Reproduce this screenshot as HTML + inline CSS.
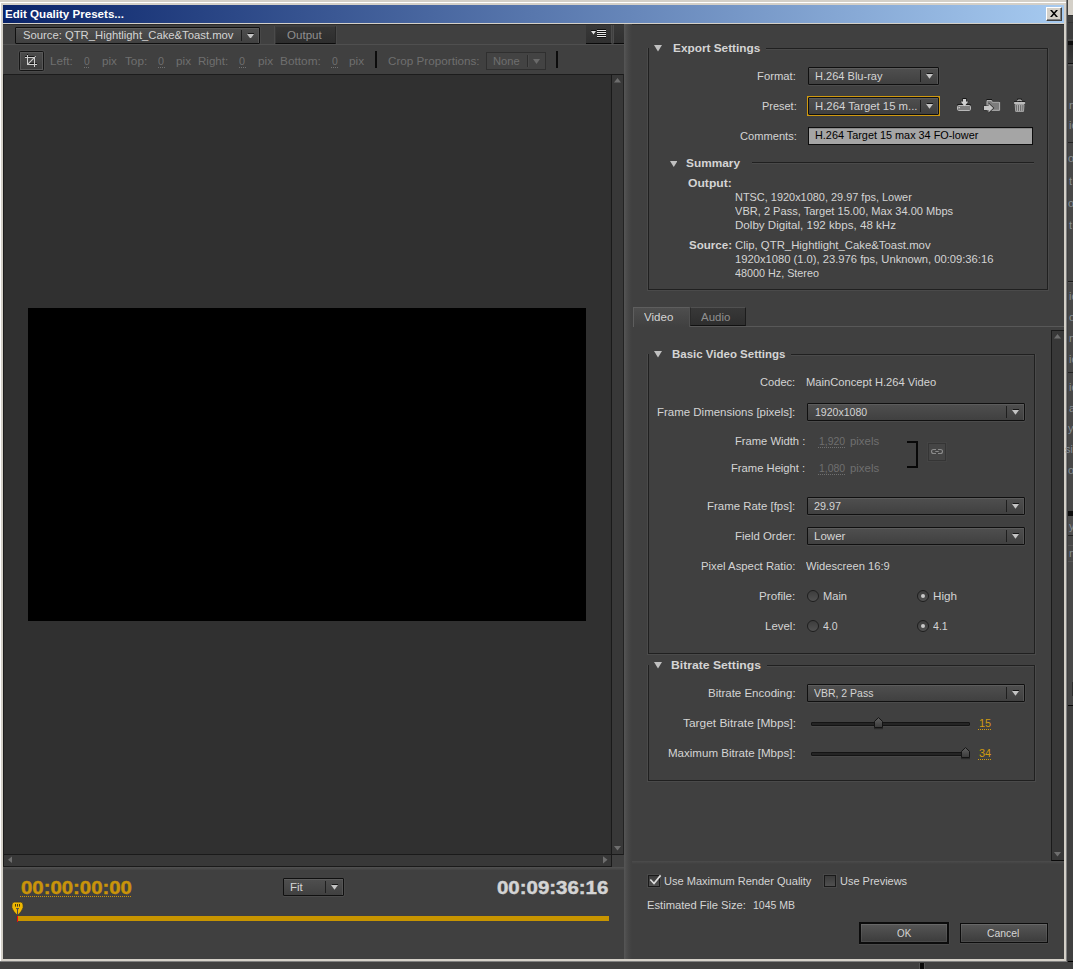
<!DOCTYPE html>
<html><head><meta charset="utf-8"><title>Edit Quality Presets</title>
<style>
html,body{margin:0;padding:0;overflow:hidden;}
#r{position:absolute;left:0;top:0;width:1073px;height:969px;overflow:hidden;}
body{width:1073px;height:969px;position:relative;overflow:hidden;background:#404040;font-family:"Liberation Sans", sans-serif;font-size:11px;}
#r div,#r svg{position:absolute;display:block;}
#r .t{white-space:pre;line-height:20px;height:20px;transform-origin:0 0;}
#r .d{position:absolute;height:1px;}
</style></head>
<body><div id="r">
<div style="left:1068px;top:0px;width:5px;height:15px;background:#d4d0c8;"></div>
<div style="left:1068px;top:15px;width:5px;height:1px;background:#333;"></div>
<div style="left:1068px;top:16px;width:5px;height:6px;background:#404040;"></div>
<div style="left:1068px;top:22px;width:5px;height:1px;background:#333;"></div>
<div style="left:1068px;top:23px;width:5px;height:16px;background:#3e3e3e;"></div>
<div style="left:1068px;top:39px;width:5px;height:2px;background:#4a4a4a;"></div>
<div style="left:1068px;top:41px;width:5px;height:4px;background:#0e0e0e;"></div>
<div style="left:1068px;top:45px;width:5px;height:18px;background:linear-gradient(#2e2e2e,#3a3a3a);"></div>
<div style="left:1068px;top:63px;width:5px;height:1px;background:#111;"></div>
<div style="left:1068px;top:64px;width:5px;height:2px;background:#555;"></div>
<div style="left:1068px;top:66px;width:5px;height:639px;background:#484848;"></div>
<div style="left:1068px;top:142px;width:5px;height:1px;background:#242424;"></div>
<div style="left:1068px;top:281px;width:5px;height:1px;background:#1c1c1c;"></div>
<div style="left:1068px;top:282px;width:5px;height:1px;background:#555;"></div>
<div style="left:1068px;top:372px;width:5px;height:1px;background:#242424;"></div>
<div style="left:1068px;top:511px;width:5px;height:5px;background:#0e0e0e;"></div>
<div style="left:1068px;top:516px;width:5px;height:19px;background:#4e4e4e;"></div>
<div style="left:1068px;top:535px;width:5px;height:1px;background:#242424;"></div>
<div style="left:1068px;top:545px;width:5px;height:1px;background:#565656;"></div>
<div style="left:1068px;top:561px;width:5px;height:1px;background:#565656;"></div>
<div style="left:1068px;top:705px;width:5px;height:1px;background:#0a0a0a;"></div>
<div style="left:1068px;top:706px;width:5px;height:255px;background:#404040;"></div>
<div style="left:1068px;top:961px;width:5px;height:1px;background:#000;"></div>
<div style="left:1072px;top:682px;width:1px;height:14px;background:#2c2c2c;"></div>
<div style="left:0px;top:962px;width:1073px;height:7px;background:#404040;"></div>
<div style="left:919px;top:963px;width:6px;height:6px;background:#555;"></div>
<div style="left:920px;top:963px;width:4px;height:6px;background:#0a0a0a;"></div>
<div style="left:0px;top:0px;width:1068px;height:962px;background:#d4d0c8;"></div>
<div style="left:0px;top:2px;width:1066px;height:1px;background:#fff;"></div>
<div style="left:0px;top:2px;width:1px;height:959px;background:#fff;"></div>
<div style="left:1066px;top:0px;width:1px;height:962px;background:#808080;"></div>
<div style="left:1067px;top:0px;width:1px;height:962px;background:#404040;"></div>
<div style="left:0px;top:961px;width:1067px;height:1px;background:#808080;"></div>
<div style="left:3px;top:5px;width:1061px;height:18px;background:linear-gradient(90deg,#0a246a,#a6caf0);"></div>
<div style="left:1046px;top:7px;width:16px;height:14px;box-sizing:border-box;background:#d4d0c8;border:1px solid;border-color:#fff #404040 #404040 #fff;box-shadow:inset -1px -1px 0 #808080;"></div>
<svg style="left:1050px;top:10px" width="8" height="7" viewBox="0 0 8 7"><path d="M0 0H2L8 7H6ZM6 0H8L2 7H0Z" fill="#000"/></svg>
<div style="left:3px;top:24px;width:1061px;height:935px;background:#404040;"></div>
<div style="left:3px;top:24px;width:1061px;height:1px;background:#2c2c2c;"></div>
<div style="left:15px;top:27px;width:245px;height:17px;box-sizing:border-box;border:1px solid #101010;border-radius:1px;background:linear-gradient(#4f4f4f,#404040);box-shadow:inset 0 1px 0 #5c5c5c,inset -1px 0 0 #555,0 1px 0 #4b4b4b,1px 0 0 #484848;"></div><div style="left:241px;top:30px;width:1px;height:11px;background:#1e1e1e;"></div><div style="left:247.5px;top:32.5px;width:6.0px;height:1.0px;background:#161616;"></div><svg style="left:247.0px;top:33.5px" width="7" height="4.8" viewBox="0 0 7 4.8"><path d="M0 0H7L3.5 4.8Z" fill="#c4c4c4"/></svg>
<div style="left:275px;top:26px;width:61px;height:18px;box-sizing:border-box;background:linear-gradient(#363636,#2d2d2d);border:1px solid;border-color:#3e3e3e #282828 #0c0c0c #3a3a3a;box-shadow:-1px 0 0 #4a4a4a,1px 0 0 #484848;"></div>
<div style="left:586px;top:25px;width:26px;height:19px;box-sizing:border-box;background:linear-gradient(#383838,#303030);border-right:1px solid #4c4c4c;border-bottom:1px solid #0a0a0a;"></div>
<div style="left:613px;top:25px;width:11px;height:19px;box-sizing:border-box;background:linear-gradient(#383838,#303030);border-left:1px solid #4c4c4c;border-bottom:1px solid #0a0a0a;"></div>
<div style="left:597px;top:29px;width:9px;height:9px;background:#111;"></div>
<div style="left:597px;top:30px;width:9px;height:1px;background:#e8e8e8;"></div>
<div style="left:597px;top:32px;width:9px;height:1px;background:#e8e8e8;"></div>
<div style="left:597px;top:34px;width:9px;height:1px;background:#e8e8e8;"></div>
<div style="left:597px;top:36px;width:9px;height:1px;background:#e8e8e8;"></div>
<div style="left:591px;top:30px;width:5px;height:1px;background:#111;"></div>
<svg style="left:591.0px;top:31px" width="5" height="3.6" viewBox="0 0 5 3.6"><path d="M0 0H5L2.5 3.6Z" fill="#e0e0e0"/></svg>
<div style="left:3px;top:44px;width:621px;height:1px;background:#4f4f4f;"></div>
<div style="left:19px;top:51px;width:25px;height:20px;box-sizing:border-box;border:1px solid #151515;border-radius:1.5px;background:linear-gradient(#4c4c4c,#3c3c3c);box-shadow:inset 0 0 0 1px #585858,0 0 0 1px #494949;"></div>
<div style="left:25px;top:56px;width:9px;height:1px;background:#161616;"></div>
<div style="left:28px;top:63px;width:9px;height:1px;background:#161616;"></div>
<div style="left:27px;top:54px;width:1px;height:1px;background:#161616;"></div>
<div style="left:27px;top:55px;width:1px;height:10px;background:#cecece;"></div>
<div style="left:25px;top:57px;width:10px;height:1px;background:#cecece;"></div>
<div style="left:34px;top:57px;width:1px;height:10px;background:#cecece;"></div>
<div style="left:27px;top:64px;width:10px;height:1px;background:#cecece;"></div>
<div style="left:35px;top:56px;width:1px;height:1px;background:#b0b0b0;"></div>
<svg style="left:27px;top:57px" width="8" height="8" viewBox="0 0 8 8"><path d="M1.2 6.8L6.8 1.2" stroke="#cecece" stroke-width="1.1"/></svg>
<div style="left:375px;top:51px;width:2px;height:17px;background:#0c0c0c;"></div>
<div style="left:556px;top:51px;width:2px;height:17px;background:#0c0c0c;"></div>
<div style="left:486px;top:52px;width:60px;height:18px;box-sizing:border-box;border:1px solid #2f2f2f;background:#434343;"></div><div style="left:527px;top:55px;width:1px;height:12px;background:#2e2e2e;"></div><div style="left:528px;top:55px;width:1px;height:12px;background:#4a4a4a;"></div><svg style="left:533.0px;top:59.0px" width="7" height="5" viewBox="0 0 7 5"><path d="M0 0H7L3.5 5Z" fill="#6a6a6a"/></svg>
<div style="left:3px;top:74px;width:608px;height:780px;background:#303030;"></div>
<div style="left:3px;top:74px;width:608px;height:1px;background:#1c1c1c;"></div>
<div style="left:3px;top:74px;width:1px;height:780px;background:#1c1c1c;"></div>
<div style="left:28px;top:308px;width:558px;height:313px;background:#000;"></div>
<div style="left:611px;top:74px;width:13px;height:781px;box-sizing:border-box;background:#383838;border:1px solid #1a1a1a;border-right-color:#222;"></div>
<svg style="left:614px;top:78.3px" width="7" height="4.6" viewBox="0 0 8 5"><path d="M0 5H8L4 0Z" fill="#6e6e6e"/></svg>
<svg style="left:614px;top:846px" width="7" height="4.6" viewBox="0 0 8 5"><path d="M0 0H8L4 5Z" fill="#6e6e6e"/></svg>
<div style="left:3px;top:854px;width:609px;height:13px;box-sizing:border-box;background:#383838;border:1px solid #1a1a1a;"></div>
<svg style="left:7.7px;top:856.3px" width="4.5" height="7.6" viewBox="0 0 5 8"><path d="M5 0V8L0 4Z" fill="#6e6e6e"/></svg>
<svg style="left:603px;top:856.3px" width="4.5" height="7.6" viewBox="0 0 5 8"><path d="M0 0V8L5 4Z" fill="#6e6e6e"/></svg>
<div style="left:3px;top:867px;width:621px;height:3px;background:linear-gradient(#525252,#4a4a4a 50%,#434343);"></div>
<div style="left:283px;top:878px;width:61px;height:18px;box-sizing:border-box;border:1px solid #101010;border-radius:1px;background:linear-gradient(#4f4f4f,#404040);box-shadow:inset 0 1px 0 #5c5c5c,inset -1px 0 0 #555,0 1px 0 #4b4b4b,1px 0 0 #484848;"></div><div style="left:325px;top:881px;width:1px;height:12px;background:#1e1e1e;"></div><div style="left:331.5px;top:884.0px;width:6.0px;height:1.0px;background:#161616;"></div><svg style="left:331.0px;top:885.0px" width="7" height="4.8" viewBox="0 0 7 4.8"><path d="M0 0H7L3.5 4.8Z" fill="#c4c4c4"/></svg>
<div style="left:18px;top:916px;width:591px;height:5px;background:#c89500;"></div>
<div style="left:17px;top:916px;width:1px;height:6px;background:#f00808;"></div>
<svg style="left:10px;top:900px" width="15" height="17" viewBox="10 900 15 17"><path d="M14.2 902.1H20.8Q23.1 902.3 23.1 905V907.6Q22.5 910.8 17.5 915.6Q12.5 910.8 11.9 907.6V905Q11.9 902.3 14.2 902.1Z" fill="#f0b800" stroke="#3a3628" stroke-width="0.7"/><path d="M15.5 904V906.6M17.5 904V906.6M19.5 904V906.6" stroke="#3a3010" stroke-width="0.9" fill="none"/><path d="M16 908.6H19M17.5 909V915" stroke="#4a4a4a" stroke-width="1" fill="none"/></svg>
<div style="left:624px;top:24px;width:8px;height:935px;background:linear-gradient(90deg,#565656,#4b4b4b 35%,#454545 65%,#404040);"></div>
<div style="left:648px;top:48px;width:1px;height:241px;background:#202020;"></div><div style="left:1047px;top:48px;width:1px;height:242px;background:#202020;"></div><div style="left:648px;top:289px;width:399px;height:1px;background:#202020;"></div><div style="left:766px;top:48px;width:281px;height:1px;background:#202020;"></div><div style="left:647px;top:48px;width:1px;height:243px;background:#4a4a4a;"></div><div style="left:1048px;top:48px;width:1px;height:243px;background:#4a4a4a;"></div><div style="left:648px;top:290px;width:400px;height:1px;background:#4a4a4a;"></div><div style="left:766px;top:49px;width:281px;height:1px;background:#4a4a4a;"></div>
<svg style="left:654.2px;top:45px" width="8" height="6.5" viewBox="0 0 8 6.5"><path d="M0 0H8L4.0 6.5Z" fill="#c0c0c0"/></svg>
<div style="left:808px;top:67px;width:131px;height:18px;box-sizing:border-box;border:1px solid #101010;border-radius:1px;background:linear-gradient(#4f4f4f,#404040);box-shadow:inset 0 1px 0 #5c5c5c,inset -1px 0 0 #555,0 1px 0 #4b4b4b,1px 0 0 #484848;"></div><div style="left:920px;top:70px;width:1px;height:12px;background:#1e1e1e;"></div><div style="left:926.5px;top:73.0px;width:6.0px;height:1.0px;background:#161616;"></div><svg style="left:926.0px;top:74.0px" width="7" height="4.8" viewBox="0 0 7 4.8"><path d="M0 0H7L3.5 4.8Z" fill="#c4c4c4"/></svg>
<div style="left:807px;top:96px;width:133px;height:20px;background:#d19a0f;"></div><div style="left:808px;top:97px;width:131px;height:18px;box-sizing:border-box;border:1px solid #101010;border-radius:1px;background:linear-gradient(#4f4f4f,#404040);box-shadow:inset 0 1px 0 #5c5c5c,inset -1px 0 0 #555;"></div><div style="left:920px;top:100px;width:1px;height:12px;background:#1e1e1e;"></div><div style="left:926.5px;top:103.0px;width:6.0px;height:1.0px;background:#161616;"></div><svg style="left:926.0px;top:104.0px" width="7" height="4.8" viewBox="0 0 7 4.8"><path d="M0 0H7L3.5 4.8Z" fill="#c4c4c4"/></svg>
<svg style="left:955px;top:97px" width="18" height="16" viewBox="955 97 18 16">
<path d="M962.5 98H966.5V101H969L964.5 106L960 101H962.5Z" fill="#151515"/>
<rect x="957" y="104" width="14" height="7" rx="1.2" fill="#1a1a1a"/>
<rect x="957.5" y="105.5" width="13" height="5" rx="1" fill="#7e7e7e" stroke="#b8b8b8" stroke-width="1"/>
<path d="M963 99H966V101.6H968.4L964.5 106.3L960.6 101.6H963Z" fill="#d0d0d0"/>
<rect x="958.6" y="107" width="1.2" height="1.2" fill="#d8d8d8"/>
</svg>
<svg style="left:982px;top:97px" width="20" height="17" viewBox="982 97 20 17">
<path d="M986.5 99H992V101.2H1000V102H986.5Z" fill="#151515"/>
<path d="M987 110.3V100.5H991.5L992.2 102.2H999.6V110.3Z" fill="#7c7c7c" stroke="#b4b4b4" stroke-width="1"/>
<path d="M983.5 105.5H988.5V102.5L994.3 108L988.5 113.5V110.5H983.5Z" fill="#2a2a2a"/>
<path d="M984 106H988.5V103.5L993.3 108L988.5 112.5V110H984Z" fill="#c6c6c6"/>
</svg>
<svg style="left:1012px;top:97px" width="16" height="16" viewBox="1012 97 16 16">
<rect x="1017" y="98.6" width="5" height="3" rx="1" fill="#1a1a1a"/>
<rect x="1017.7" y="100.1" width="3.6" height="2.5" rx="0.9" fill="none" stroke="#c6c6c6" stroke-width="1.2"/>
<rect x="1014" y="101.2" width="11.2" height="1" fill="#1a1a1a"/>
<rect x="1014" y="102" width="11.2" height="2" rx="0.8" fill="#bdbdbd"/>
<path d="M1015.2 104.6H1024L1023.5 111.4H1015.7Z" fill="#6a6a6a" stroke="#b0b0b0" stroke-width="0.9"/>
<path d="M1017.4 105V111M1019.6 105V111M1021.8 105V111" stroke="#c0c0c0" stroke-width="0.9"/>
</svg>

<div style="left:808px;top:127px;width:225px;height:18px;box-sizing:border-box;border:1px solid #0c0c0c;background:#a5a5a5;box-shadow:inset 0 1px 0 #8a8a8a;"></div>
<svg style="left:669.55px;top:161px" width="7.5" height="6" viewBox="0 0 7.5 6"><path d="M0 0H7.5L3.75 6Z" fill="#c0c0c0"/></svg>
<div style="left:752px;top:162px;width:282px;height:1px;background:#202020;"></div>
<div style="left:752px;top:163px;width:282px;height:1px;background:#4a4a4a;"></div>
<div style="left:689px;top:326px;width:375px;height:1px;background:#585858;"></div>
<div style="left:633px;top:307px;width:57px;height:20px;box-sizing:border-box;background:linear-gradient(#4e4e4e,#404040);border:1px solid;border-color:#5e5e5e #505050 #404040 #5e5e5e;border-bottom:none;"></div>
<div style="left:690px;top:307px;width:56px;height:19px;box-sizing:border-box;background:linear-gradient(#383838,#2e2e2e);border:1px solid;border-color:#505050 #1c1c1c #111 #2a2a2a;"></div>
<div style="left:1051px;top:330px;width:13px;height:531px;box-sizing:border-box;background:#383838;border:1px solid #1a1a1a;border-right:none;border-bottom-color:#0a0a0a;"></div>
<svg style="left:1054px;top:334px" width="7" height="4.6" viewBox="0 0 8 5"><path d="M0 5H8L4 0Z" fill="#6e6e6e"/></svg>
<svg style="left:1054px;top:852px" width="7" height="4.5" viewBox="0 0 8 5"><path d="M0 0H8L4 5Z" fill="#6e6e6e"/></svg>
<div style="left:648px;top:354px;width:1px;height:299px;background:#202020;"></div><div style="left:1034px;top:354px;width:1px;height:300px;background:#202020;"></div><div style="left:648px;top:653px;width:386px;height:1px;background:#202020;"></div><div style="left:791px;top:354px;width:243px;height:1px;background:#202020;"></div><div style="left:647px;top:354px;width:1px;height:301px;background:#4a4a4a;"></div><div style="left:1035px;top:354px;width:1px;height:301px;background:#4a4a4a;"></div><div style="left:648px;top:654px;width:387px;height:1px;background:#4a4a4a;"></div><div style="left:791px;top:355px;width:243px;height:1px;background:#4a4a4a;"></div>
<svg style="left:654.2px;top:351px" width="8" height="6.5" viewBox="0 0 8 6.5"><path d="M0 0H8L4.0 6.5Z" fill="#c0c0c0"/></svg>
<div style="left:807px;top:403px;width:218px;height:18px;box-sizing:border-box;border:1px solid #101010;border-radius:1px;background:linear-gradient(#4f4f4f,#404040);box-shadow:inset 0 1px 0 #5c5c5c,inset -1px 0 0 #555,0 1px 0 #4b4b4b,1px 0 0 #484848;"></div><div style="left:1006px;top:406px;width:1px;height:12px;background:#1e1e1e;"></div><div style="left:1012.5px;top:409.0px;width:6.0px;height:1.0px;background:#161616;"></div><svg style="left:1012.0px;top:410.0px" width="7" height="4.8" viewBox="0 0 7 4.8"><path d="M0 0H7L3.5 4.8Z" fill="#c4c4c4"/></svg>
<div style="left:807px;top:497px;width:218px;height:18px;box-sizing:border-box;border:1px solid #101010;border-radius:1px;background:linear-gradient(#4f4f4f,#404040);box-shadow:inset 0 1px 0 #5c5c5c,inset -1px 0 0 #555,0 1px 0 #4b4b4b,1px 0 0 #484848;"></div><div style="left:1006px;top:500px;width:1px;height:12px;background:#1e1e1e;"></div><div style="left:1012.5px;top:503.0px;width:6.0px;height:1.0px;background:#161616;"></div><svg style="left:1012.0px;top:504.0px" width="7" height="4.8" viewBox="0 0 7 4.8"><path d="M0 0H7L3.5 4.8Z" fill="#c4c4c4"/></svg>
<div style="left:807px;top:527px;width:218px;height:18px;box-sizing:border-box;border:1px solid #101010;border-radius:1px;background:linear-gradient(#4f4f4f,#404040);box-shadow:inset 0 1px 0 #5c5c5c,inset -1px 0 0 #555,0 1px 0 #4b4b4b,1px 0 0 #484848;"></div><div style="left:1006px;top:530px;width:1px;height:12px;background:#1e1e1e;"></div><div style="left:1012.5px;top:533.0px;width:6.0px;height:1.0px;background:#161616;"></div><svg style="left:1012.0px;top:534.0px" width="7" height="4.8" viewBox="0 0 7 4.8"><path d="M0 0H7L3.5 4.8Z" fill="#c4c4c4"/></svg>
<div style="left:907px;top:441px;width:11px;height:27px;box-sizing:border-box;border:2px solid #080808;border-left:none;"></div>
<div style="left:928px;top:443px;width:18px;height:18px;box-sizing:border-box;border:1px solid #353535;background:#454545;box-shadow:0 0 0 1px #444;"></div>
<svg style="left:930px;top:447px" width="14" height="10" viewBox="0 0 14 10"><path d="M6 2.5H3.5Q1.5 2.5 1.5 4.5Q1.5 6.5 3.5 6.5H6M8 2.5H10.5Q12.5 2.5 12.5 4.5Q12.5 6.5 10.5 6.5H8M5.3 4.5H8.7" fill="none" stroke="#8c8c8c" stroke-width="1.1"/></svg>
<svg style="left:806px;top:589px" width="14" height="14" viewBox="0 0 14 14"><defs><linearGradient id="rg813596" x1="0" y1="0" x2="0" y2="1"><stop offset="0" stop-color="#3c3c3c"/><stop offset="1" stop-color="#525252"/></linearGradient></defs><circle cx="7" cy="7" r="5.5" fill="url(#rg813596)" stroke="#1e1e1e" stroke-width="1"/></svg>
<svg style="left:916px;top:589px" width="14" height="14" viewBox="0 0 14 14"><defs><linearGradient id="rg923596" x1="0" y1="0" x2="0" y2="1"><stop offset="0" stop-color="#3c3c3c"/><stop offset="1" stop-color="#525252"/></linearGradient></defs><circle cx="7" cy="7" r="5.5" fill="url(#rg923596)" stroke="#1e1e1e" stroke-width="1"/><circle cx="7" cy="7" r="2" fill="#c8c8c8"/></svg>
<svg style="left:806px;top:619px" width="14" height="14" viewBox="0 0 14 14"><defs><linearGradient id="rg813626" x1="0" y1="0" x2="0" y2="1"><stop offset="0" stop-color="#3c3c3c"/><stop offset="1" stop-color="#525252"/></linearGradient></defs><circle cx="7" cy="7" r="5.5" fill="url(#rg813626)" stroke="#1e1e1e" stroke-width="1"/></svg>
<svg style="left:916px;top:619px" width="14" height="14" viewBox="0 0 14 14"><defs><linearGradient id="rg923626" x1="0" y1="0" x2="0" y2="1"><stop offset="0" stop-color="#3c3c3c"/><stop offset="1" stop-color="#525252"/></linearGradient></defs><circle cx="7" cy="7" r="5.5" fill="url(#rg923626)" stroke="#1e1e1e" stroke-width="1"/><circle cx="7" cy="7" r="2" fill="#c8c8c8"/></svg>
<div style="left:648px;top:665px;width:1px;height:115px;background:#202020;"></div><div style="left:1034px;top:665px;width:1px;height:116px;background:#202020;"></div><div style="left:648px;top:780px;width:386px;height:1px;background:#202020;"></div><div style="left:767px;top:665px;width:267px;height:1px;background:#202020;"></div><div style="left:647px;top:665px;width:1px;height:117px;background:#4a4a4a;"></div><div style="left:1035px;top:665px;width:1px;height:117px;background:#4a4a4a;"></div><div style="left:648px;top:781px;width:387px;height:1px;background:#4a4a4a;"></div><div style="left:767px;top:666px;width:267px;height:1px;background:#4a4a4a;"></div>
<svg style="left:654.2px;top:662px" width="8" height="6.5" viewBox="0 0 8 6.5"><path d="M0 0H8L4.0 6.5Z" fill="#c0c0c0"/></svg>
<div style="left:807px;top:684px;width:218px;height:18px;box-sizing:border-box;border:1px solid #101010;border-radius:1px;background:linear-gradient(#4f4f4f,#404040);box-shadow:inset 0 1px 0 #5c5c5c,inset -1px 0 0 #555,0 1px 0 #4b4b4b,1px 0 0 #484848;"></div><div style="left:1006px;top:687px;width:1px;height:12px;background:#1e1e1e;"></div><div style="left:1012.5px;top:690.0px;width:6.0px;height:1.0px;background:#161616;"></div><svg style="left:1012.0px;top:691.0px" width="7" height="4.8" viewBox="0 0 7 4.8"><path d="M0 0H7L3.5 4.8Z" fill="#c4c4c4"/></svg>
<div style="left:811px;top:722px;width:159px;height:4px;box-sizing:border-box;border:1px solid #141414;background:#242424;border-radius:1px;box-shadow:0 1px 0 #484848;"></div><svg style="left:873.0px;top:716px" width="11" height="14" viewBox="0 0 11 14"><defs><linearGradient id="sg724" x1="0" y1="0" x2="0" y2="1"><stop offset="0" stop-color="#606060"/><stop offset="1" stop-color="#3a3a3a"/></linearGradient></defs><path d="M1 12.6H10" stroke="#2a2a2a" stroke-width="1.2"/><path d="M5.5 1.6L9.5 5.4V11.5H1.5V5.4Z" fill="url(#sg724)" stroke="#141414" stroke-width="1"/></svg>
<div style="left:811px;top:752px;width:159px;height:4px;box-sizing:border-box;border:1px solid #141414;background:#242424;border-radius:1px;box-shadow:0 1px 0 #484848;"></div><svg style="left:959.5px;top:746px" width="11" height="14" viewBox="0 0 11 14"><defs><linearGradient id="sg754" x1="0" y1="0" x2="0" y2="1"><stop offset="0" stop-color="#606060"/><stop offset="1" stop-color="#3a3a3a"/></linearGradient></defs><path d="M1 12.6H10" stroke="#2a2a2a" stroke-width="1.2"/><path d="M5.5 1.6L9.5 5.4V11.5H1.5V5.4Z" fill="url(#sg754)" stroke="#141414" stroke-width="1"/></svg>
<div style="left:632px;top:861px;width:432px;height:3px;background:linear-gradient(#4c4c4c,#474747 40%,#404040);"></div>
<div style="left:648px;top:875px;width:12px;height:12px;box-sizing:border-box;border:1px solid #1a1a1a;background:linear-gradient(#3c3c3c,#505050);box-shadow:0 0 0 1px #494949;"></div><svg style="left:648px;top:873px" width="14" height="14" viewBox="0 0 14 14"><path d="M2.3 6.5L6 10.5L12.6 2.4" fill="none" stroke="#dcdcdc" stroke-width="1.7"/></svg>
<div style="left:824px;top:875px;width:12px;height:12px;box-sizing:border-box;border:1px solid #1a1a1a;background:linear-gradient(#3c3c3c,#505050);box-shadow:0 0 0 1px #494949;"></div>
<div style="left:859px;top:922px;width:90px;height:22px;box-sizing:border-box;border:2px solid #0c0c0c;background:linear-gradient(#565656,#3c3c3c);box-shadow:inset 0 1px 0 #676767,inset 0 0 0 1px rgba(255,255,255,0.07),0 1px 0 #4a4a4a,1px 0 0 #474747;"></div>
<div style="left:960px;top:923px;width:88px;height:20px;box-sizing:border-box;border:1px solid #0c0c0c;background:linear-gradient(#565656,#3c3c3c);box-shadow:inset 0 1px 0 #676767,inset 0 0 0 1px rgba(255,255,255,0.07),0 1px 0 #4a4a4a,1px 0 0 #474747;"></div>
<div class="t" id="t0" style="left:5px;top:4.00px;font-size:11px;font-weight:bold;color:#ffffff;transform:scaleX(1.0522);">Edit Quality Presets...</div>
<div class="t" id="t1" style="left:22.5px;top:25.00px;font-size:11px;font-weight:normal;color:#d4d4d4;transform:scaleX(1.0246);">Source: QTR_Hightlight_Cake&amp;Toast.mov</div>
<div class="t" id="t2" style="left:286.5px;top:25.00px;font-size:11px;font-weight:normal;color:#8f8f8f;transform:scaleX(1.0505);">Output</div>
<div class="t" id="t3" style="left:50.3px;top:51.00px;font-size:11px;font-weight:normal;color:#6f6f6f;transform:scaleX(1.0604);">Left:</div>
<div class="t" id="t4" style="left:84.3px;top:51.00px;font-size:11px;font-weight:normal;color:#6f6f6f;transform:scaleX(0.9306);">0</div>
<div class="d" style="left:83.8px;top:67px;width:6.7px;background:repeating-linear-gradient(90deg,#6f6f6f 0 1px,transparent 1px 2px);"></div>
<div class="t" id="t5" style="left:102.4px;top:51.00px;font-size:11px;font-weight:normal;color:#6f6f6f;transform:scaleX(1.0596);">pix</div>
<div class="t" id="t6" style="left:125px;top:51.00px;font-size:11px;font-weight:normal;color:#6f6f6f;transform:scaleX(1.0675);">Top:</div>
<div class="t" id="t7" style="left:158px;top:51.00px;font-size:11px;font-weight:normal;color:#6f6f6f;transform:scaleX(0.9796);">0</div>
<div class="d" style="left:157.5px;top:67px;width:7.0px;background:repeating-linear-gradient(90deg,#6f6f6f 0 1px,transparent 1px 2px);"></div>
<div class="t" id="t8" style="left:176px;top:51.00px;font-size:11px;font-weight:normal;color:#6f6f6f;transform:scaleX(1.0667);">pix</div>
<div class="t" id="t9" style="left:198.3px;top:51.00px;font-size:11px;font-weight:normal;color:#6f6f6f;transform:scaleX(1.0504);">Right:</div>
<div class="t" id="t10" style="left:239px;top:51.00px;font-size:11px;font-weight:normal;color:#6f6f6f;transform:scaleX(0.9796);">0</div>
<div class="d" style="left:238.5px;top:67px;width:7.0px;background:repeating-linear-gradient(90deg,#6f6f6f 0 1px,transparent 1px 2px);"></div>
<div class="t" id="t11" style="left:257.5px;top:51.00px;font-size:11px;font-weight:normal;color:#6f6f6f;transform:scaleX(1.0738);">pix</div>
<div class="t" id="t12" style="left:279.7px;top:51.00px;font-size:11px;font-weight:normal;color:#6f6f6f;transform:scaleX(1.0763);">Bottom:</div>
<div class="t" id="t13" style="left:331.8px;top:51.00px;font-size:11px;font-weight:normal;color:#6f6f6f;transform:scaleX(0.9469);">0</div>
<div class="d" style="left:331.3px;top:67px;width:6.8px;background:repeating-linear-gradient(90deg,#6f6f6f 0 1px,transparent 1px 2px);"></div>
<div class="t" id="t14" style="left:349.4px;top:51.00px;font-size:11px;font-weight:normal;color:#6f6f6f;transform:scaleX(1.0738);">pix</div>
<div class="t" id="t15" style="left:387.9px;top:51.00px;font-size:11px;font-weight:normal;color:#6f6f6f;transform:scaleX(1.0624);">Crop Proportions:</div>
<div class="t" id="t16" style="left:493.4px;top:51.00px;font-size:11px;font-weight:normal;color:#6f6f6f;transform:scaleX(1.0115);">None</div>
<div class="t" id="t17" style="left:20.5px;top:877.50px;font-size:18px;font-weight:bold;color:#c9940a;transform:scaleX(1.1307);-webkit-text-stroke:0.45px #c9940a;">00:00:00:00</div>
<div class="d" style="left:20.0px;top:896.0px;width:111.9px;background:repeating-linear-gradient(90deg,#c9940a 0 1px,transparent 1px 2px);"></div>
<div class="t" id="t18" style="left:497px;top:877.50px;font-size:18px;font-weight:bold;color:#d4d4d4;transform:scaleX(1.1348);-webkit-text-stroke:0.45px #d4d4d4;">00:09:36:16</div>
<div class="t" id="t19" style="left:290.4px;top:877.00px;font-size:11px;font-weight:normal;color:#d4d4d4;transform:scaleX(1.0462);">Fit</div>
<div class="t" id="t20" style="left:672.6px;top:38.00px;font-size:11px;font-weight:bold;color:#d4d4d4;transform:scaleX(1.0738);">Export Settings</div>
<div class="t" id="t21" style="left:757.4px;top:66.00px;font-size:11px;font-weight:normal;color:#d4d4d4;transform:scaleX(1.0236);">Format:</div>
<div class="t" id="t22" style="left:815px;top:66.00px;font-size:11px;font-weight:normal;color:#d4d4d4;transform:scaleX(1.0035);">H.264 Blu-ray</div>
<div class="t" id="t23" style="left:761.5px;top:96.00px;font-size:11px;font-weight:normal;color:#d4d4d4;transform:scaleX(0.9954);">Preset:</div>
<div class="t" id="t24" style="left:815px;top:96.00px;font-size:11px;font-weight:normal;color:#d4d4d4;transform:scaleX(1.0305);">H.264 Target 15 m...</div>
<div class="t" id="t25" style="left:739.6px;top:126.00px;font-size:11px;font-weight:normal;color:#d4d4d4;transform:scaleX(1.0098);">Comments:</div>
<div class="t" id="t26" style="left:814.7px;top:125.00px;font-size:11px;font-weight:normal;color:#000000;transform:scaleX(0.9868);">H.264 Target 15 max 34 FO-lower</div>
<div class="t" id="t27" style="left:686px;top:153.00px;font-size:11px;font-weight:bold;color:#d4d4d4;transform:scaleX(1.0770);">Summary</div>
<div class="t" id="t28" style="left:688px;top:173.00px;font-size:11px;font-weight:bold;color:#d4d4d4;transform:scaleX(1.1032);">Output:</div>
<div class="t" id="t29" style="left:735.4px;top:187.00px;font-size:11px;font-weight:normal;color:#d4d4d4;transform:scaleX(0.9935);">NTSC, 1920x1080, 29.97 fps, Lower</div>
<div class="t" id="t30" style="left:735.4px;top:201.00px;font-size:11px;font-weight:normal;color:#d4d4d4;transform:scaleX(1.0057);">VBR, 2 Pass, Target 15.00, Max 34.00 Mbps</div>
<div class="t" id="t31" style="left:735.4px;top:215.00px;font-size:11px;font-weight:normal;color:#d4d4d4;transform:scaleX(1.0533);">Dolby Digital, 192 kbps, 48 kHz</div>
<div class="t" id="t32" style="left:689px;top:235.00px;font-size:11px;font-weight:bold;color:#d4d4d4;transform:scaleX(1.0496);">Source:</div>
<div class="t" id="t33" style="left:735.4px;top:235.00px;font-size:11px;font-weight:normal;color:#d4d4d4;transform:scaleX(1.0320);">Clip, QTR_Hightlight_Cake&amp;Toast.mov</div>
<div class="t" id="t34" style="left:735.4px;top:249.00px;font-size:11px;font-weight:normal;color:#d4d4d4;transform:scaleX(1.0181);">1920x1080 (1.0), 23.976 fps, Unknown, 00:09:36:16</div>
<div class="t" id="t35" style="left:735.4px;top:263.00px;font-size:11px;font-weight:normal;color:#d4d4d4;transform:scaleX(0.9799);">48000 Hz, Stereo</div>
<div class="t" id="t36" style="left:644.2px;top:307.00px;font-size:11px;font-weight:normal;color:#d4d4d4;transform:scaleX(1.0488);">Video</div>
<div class="t" id="t37" style="left:701px;top:307.00px;font-size:11px;font-weight:normal;color:#8f8f8f;transform:scaleX(1.0412);">Audio</div>
<div class="t" id="t38" style="left:671.6px;top:344.00px;font-size:11px;font-weight:bold;color:#d4d4d4;transform:scaleX(1.0441);">Basic Video Settings</div>
<div class="t" id="t39" style="left:760.4px;top:372.00px;font-size:11px;font-weight:normal;color:#d4d4d4;transform:scaleX(1.0098);">Codec:</div>
<div class="t" id="t40" style="left:806.3px;top:372.00px;font-size:11px;font-weight:normal;color:#d4d4d4;transform:scaleX(1.0155);">MainConcept H.264 Video</div>
<div class="t" id="t41" style="left:657.3px;top:402.00px;font-size:11px;font-weight:normal;color:#d4d4d4;transform:scaleX(1.0425);">Frame Dimensions [pixels]:</div>
<div class="t" id="t42" style="left:814.5px;top:402.00px;font-size:11px;font-weight:normal;color:#d4d4d4;transform:scaleX(0.9586);">1920x1080</div>
<div class="t" id="t43" style="left:735.2px;top:431.00px;font-size:11px;font-weight:normal;color:#d4d4d4;transform:scaleX(1.0177);">Frame Width :</div>
<div class="t" id="t44" style="left:818.6px;top:431.00px;font-size:11px;font-weight:normal;color:#6f6f6f;transform:scaleX(0.9480);">1,920</div>
<div class="d" style="left:818.1px;top:447px;width:27.1px;background:repeating-linear-gradient(90deg,#6f6f6f 0 1px,transparent 1px 2px);"></div>
<div class="t" id="t45" style="left:850.3px;top:431.00px;font-size:11px;font-weight:normal;color:#6f6f6f;transform:scaleX(1.0347);">pixels</div>
<div class="t" id="t46" style="left:731.3px;top:458.00px;font-size:11px;font-weight:normal;color:#d4d4d4;transform:scaleX(1.0199);">Frame Height :</div>
<div class="t" id="t47" style="left:818.6px;top:458.00px;font-size:11px;font-weight:normal;color:#6f6f6f;transform:scaleX(0.9480);">1,080</div>
<div class="d" style="left:818.1px;top:474px;width:27.1px;background:repeating-linear-gradient(90deg,#6f6f6f 0 1px,transparent 1px 2px);"></div>
<div class="t" id="t48" style="left:850.3px;top:458.00px;font-size:11px;font-weight:normal;color:#6f6f6f;transform:scaleX(1.0347);">pixels</div>
<div class="t" id="t49" style="left:707.3px;top:496.00px;font-size:11px;font-weight:normal;color:#d4d4d4;transform:scaleX(1.0390);">Frame Rate [fps]:</div>
<div class="t" id="t50" style="left:814px;top:496.00px;font-size:11px;font-weight:normal;color:#d4d4d4;transform:scaleX(0.9807);">29.97</div>
<div class="t" id="t51" style="left:735.2px;top:526.00px;font-size:11px;font-weight:normal;color:#d4d4d4;transform:scaleX(1.0400);">Field Order:</div>
<div class="t" id="t52" style="left:814px;top:526.00px;font-size:11px;font-weight:normal;color:#d4d4d4;transform:scaleX(1.0478);">Lower</div>
<div class="t" id="t53" style="left:701.1px;top:556.00px;font-size:11px;font-weight:normal;color:#d4d4d4;transform:scaleX(1.0303);">Pixel Aspect Ratio:</div>
<div class="t" id="t54" style="left:806.3px;top:556.00px;font-size:11px;font-weight:normal;color:#d4d4d4;transform:scaleX(1.0140);">Widescreen 16:9</div>
<div class="t" id="t55" style="left:759.3px;top:586.00px;font-size:11px;font-weight:normal;color:#d4d4d4;transform:scaleX(1.0599);">Profile:</div>
<div class="t" id="t56" style="left:823px;top:586.00px;font-size:11px;font-weight:normal;color:#d4d4d4;transform:scaleX(1.0066);">Main</div>
<div class="t" id="t57" style="left:933px;top:586.00px;font-size:11px;font-weight:normal;color:#d4d4d4;transform:scaleX(1.0608);">High</div>
<div class="t" id="t58" style="left:765px;top:616.00px;font-size:11px;font-weight:normal;color:#d4d4d4;transform:scaleX(1.0423);">Level:</div>
<div class="t" id="t59" style="left:823px;top:616.00px;font-size:11px;font-weight:normal;color:#d4d4d4;transform:scaleX(0.9544);">4.0</div>
<div class="t" id="t60" style="left:933px;top:616.00px;font-size:11px;font-weight:normal;color:#d4d4d4;transform:scaleX(0.9610);">4.1</div>
<div class="t" id="t61" style="left:671.3px;top:655.00px;font-size:11px;font-weight:bold;color:#d4d4d4;transform:scaleX(1.1058);">Bitrate Settings</div>
<div class="t" id="t62" style="left:708px;top:683.00px;font-size:11px;font-weight:normal;color:#d4d4d4;transform:scaleX(1.0456);">Bitrate Encoding:</div>
<div class="t" id="t63" style="left:814px;top:683.00px;font-size:11px;font-weight:normal;color:#d4d4d4;transform:scaleX(0.9525);">VBR, 2 Pass</div>
<div class="t" id="t64" style="left:682.5px;top:713.00px;font-size:11px;font-weight:normal;color:#d4d4d4;transform:scaleX(1.0818);">Target Bitrate [Mbps]:</div>
<div class="t" id="t65" style="left:978.5px;top:713.00px;font-size:11px;font-weight:normal;color:#d19a0f;transform:scaleX(0.9878);">15</div>
<div class="d" style="left:978.0px;top:729px;width:13.1px;background:repeating-linear-gradient(90deg,#d19a0f 0 1px,transparent 1px 2px);"></div>
<div class="t" id="t66" style="left:668px;top:743.00px;font-size:11px;font-weight:normal;color:#d4d4d4;transform:scaleX(1.0490);">Maximum Bitrate [Mbps]:</div>
<div class="t" id="t67" style="left:978.5px;top:743.00px;font-size:11px;font-weight:normal;color:#d19a0f;transform:scaleX(0.9878);">34</div>
<div class="d" style="left:978.0px;top:759px;width:13.1px;background:repeating-linear-gradient(90deg,#d19a0f 0 1px,transparent 1px 2px);"></div>
<div class="t" id="t68" style="left:664.1px;top:871.00px;font-size:11px;font-weight:normal;color:#d4d4d4;transform:scaleX(1.0046);">Use Maximum Render Quality</div>
<div class="t" id="t69" style="left:840.2px;top:871.00px;font-size:11px;font-weight:normal;color:#d4d4d4;transform:scaleX(0.9978);">Use Previews</div>
<div class="t" id="t70" style="left:647.1px;top:895.00px;font-size:11px;font-weight:normal;color:#d4d4d4;transform:scaleX(1.0175);">Estimated File Size:</div>
<div class="t" id="t71" style="left:752.6px;top:895.00px;font-size:11px;font-weight:normal;color:#d4d4d4;transform:scaleX(0.9539);">1045 MB</div>
<div class="t" id="t72" style="left:896.7px;top:923.00px;font-size:11px;font-weight:normal;color:#d4d4d4;transform:scaleX(0.8927);">OK</div>
<div class="t" id="t73" style="left:987.4px;top:923.00px;font-size:11px;font-weight:normal;color:#d4d4d4;transform:scaleX(0.9460);">Cancel</div>
<div class="t" id="t74" style="left:1069px;top:95.00px;font-size:11px;font-weight:normal;color:#848c92;transform:scaleX(1.0000);">n</div>
<div class="t" id="t75" style="left:1069px;top:115.00px;font-size:11px;font-weight:normal;color:#848c92;transform:scaleX(1.0000);">ic</div>
<div class="t" id="t76" style="left:1068px;top:148.00px;font-size:11px;font-weight:normal;color:#848c92;transform:scaleX(1.0000);">o</div>
<div class="t" id="t77" style="left:1069px;top:171.00px;font-size:11px;font-weight:normal;color:#848c92;transform:scaleX(1.0000);">t</div>
<div class="t" id="t78" style="left:1068px;top:193.00px;font-size:11px;font-weight:normal;color:#848c92;transform:scaleX(1.0000);">o</div>
<div class="t" id="t79" style="left:1069px;top:215.00px;font-size:11px;font-weight:normal;color:#848c92;transform:scaleX(1.0000);">t</div>
<div class="t" id="t80" style="left:1069px;top:286.00px;font-size:11px;font-weight:normal;color:#848c92;transform:scaleX(1.0000);">ic</div>
<div class="t" id="t81" style="left:1069px;top:307.00px;font-size:11px;font-weight:normal;color:#848c92;transform:scaleX(1.0000);">o</div>
<div class="t" id="t82" style="left:1069px;top:328.00px;font-size:11px;font-weight:normal;color:#848c92;transform:scaleX(1.0000);">n</div>
<div class="t" id="t83" style="left:1069px;top:349.00px;font-size:11px;font-weight:normal;color:#848c92;transform:scaleX(1.0000);">ic</div>
<div class="t" id="t84" style="left:1069px;top:377.00px;font-size:11px;font-weight:normal;color:#848c92;transform:scaleX(1.0000);">ic</div>
<div class="t" id="t85" style="left:1069px;top:398.00px;font-size:11px;font-weight:normal;color:#848c92;transform:scaleX(1.0000);">a</div>
<div class="t" id="t86" style="left:1068px;top:418.00px;font-size:11px;font-weight:normal;color:#848c92;transform:scaleX(1.0000);">y</div>
<div class="t" id="t87" style="left:1065px;top:439.00px;font-size:11px;font-weight:normal;color:#848c92;transform:scaleX(1.0000);">si</div>
<div class="t" id="t88" style="left:1068px;top:460.00px;font-size:11px;font-weight:normal;color:#848c92;transform:scaleX(1.0000);">o</div>
<div class="t" id="t89" style="left:1069px;top:516.00px;font-size:11px;font-weight:normal;color:#848c92;transform:scaleX(1.0000);">y</div>
<div class="t" id="t90" style="left:1069px;top:543.00px;font-size:11px;font-weight:normal;color:#848c92;transform:scaleX(1.0000);">n</div>
</div></body></html>
